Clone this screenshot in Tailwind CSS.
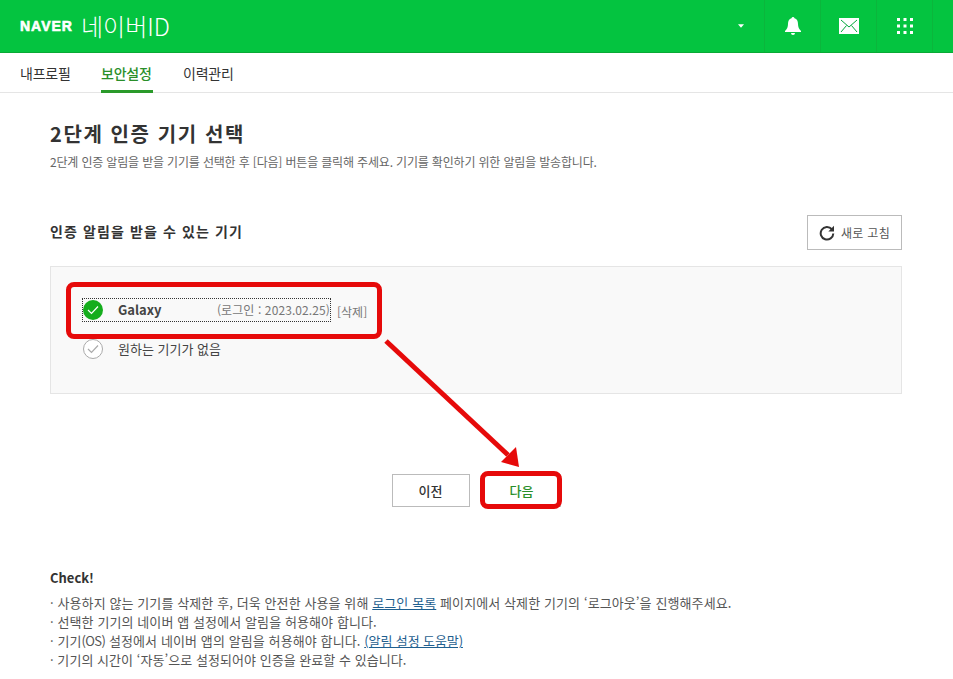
<!DOCTYPE html>
<html lang="ko">
<head>
    <meta charset="UTF-8">
    <title>네이버ID</title>
    <script src="https://cdn.jsdelivr.net/npm/@tailwindcss/browser@4"></script>
</head>
<body class="relative h-[679px] w-[953px] overflow-hidden bg-white font-['Noto_Sans_CJK_KR','Noto_Sans',sans-serif] text-[#333]">
    <!-- Header -->
    <header class="flex h-[53px] items-center border-b border-[#09aa35] bg-[#04c440] pl-[20px] text-white">
        <span class="font-['Liberation_Sans',sans-serif] text-[14px] font-black tracking-[1px] [-webkit-text-stroke:0.6px_white]">NAVER</span>
        <span class="ml-[8px] text-[24px] font-light leading-none">네이버ID</span>
        <div class="ml-auto flex h-full items-center pr-[20px]">
            <svg class="mr-[20px]" width="6" height="4" viewBox="0 0 7 4"><path d="M0 0h7L3.5 4z" fill="#fff"/></svg>
            <div class="flex h-full w-[56px] items-center justify-center border-l border-[#0bb63c]">
                <svg width="16" height="18" viewBox="0 0 16 18" fill="#fff"><path d="M8 0a1.6 1.6 0 0 1 1.5 1.2C12 2 13 4 13 7c0 3 1 5 3 7v1H0v-1c2-2 3-4 3-7 0-3 1-5 3.500-5.800A1.600 1.600 0 0 1 8 0zM6 16h4a2 2 0 0 1-4 0z"/></svg>
            </div>
            <div class="flex h-full w-[56px] items-center justify-center border-l border-[#0bb63c]">
                <svg width="20" height="16" viewBox="0 0 20 16"><rect width="20" height="16" fill="#fff"/><path d="M2 2l8 7 8-7M2 14l5.500-6.500M18 14l-5.500-6.500" fill="none" stroke="#04a83c" stroke-width="1"/></svg>
            </div>
            <div class="flex h-full w-[57px] items-center justify-center border-x border-[#0bb63c]">
                <svg width="16" height="16" viewBox="0 0 16 16" fill="#fff"><rect width="3" height="3"/><rect x="6.500" width="3" height="3"/><rect x="13" width="3" height="3"/><rect y="6.500" width="3" height="3"/><rect x="6.500" y="6.500" width="3" height="3"/><rect x="13" y="6.500" width="3" height="3"/><rect y="13" width="3" height="3"/><rect x="6.500" y="13" width="3" height="3"/><rect x="13" y="13" width="3" height="3"/></svg>
            </div>
        </div>
    </header>

    <!-- Tabs -->
    <nav class="flex h-[40px] gap-[30px] border-b border-[#e5e5e5] pl-[20px] text-[14px] tracking-[-0.2px]">
        <a class="flex h-[40px] w-[51px] items-center whitespace-nowrap">내프로필</a>
        <a class="flex h-[40px] w-[52px] items-center whitespace-nowrap border-b-[3px] border-[#2a9a2a] pt-[3px] font-medium text-[#2a8f2a]">보안설정</a>
        <a class="flex h-[40px] w-[51px] items-center whitespace-nowrap">이력관리</a>
    </nav>

    <main class="px-[50px] pr-[51px]">
        <h1 class="mt-[26px] text-[20px] font-bold leading-[30px] tracking-[1.6px]">2단계 인증 기기 선택</h1>
        <p class="mt-[5px] text-[12px] leading-[16px] tracking-[-0.17px] text-[#666]">2단계 인증 알림을 받을 기기를 선택한 후 [다음] 버튼을 클릭해 주세요. 기기를 확인하기 위한 알림을 발송합니다.</p>

        <div class="mt-[45px] flex h-[35px] items-center justify-between">
            <h2 class="pb-[2px] text-[14px] font-bold tracking-[1.1px]">인증 알림을 받을 수 있는 기기</h2>
            <button class="flex h-[35px] w-[95px] items-center justify-center gap-[6px] border border-[#bbb] bg-white text-[12px] tracking-[0.3px] text-[#555]">
                <svg width="16" height="16" viewBox="0 0 16 16" fill="none" stroke="#333" stroke-width="2"><path d="M12.800 4.200A6.300 6.300 0 1 0 14.300 8.500"/><path d="M15 0.800v5.700H9.300z" stroke="none" fill="#333"/></svg>
                새로 고침
            </button>
        </div>

        <!-- Device list -->
        <div class="mt-[16px] h-[128px] border border-[#e5e5e5] bg-[#f9f9f9] pl-[31px] pt-[31px]">
            <div class="flex h-[24px] w-[249px] items-center border border-dotted border-[#333]">
                <span class="flex h-[20px] w-[20px] shrink-0 items-center justify-center rounded-full bg-[#15ad1d]">
                    <svg width="12" height="10" viewBox="0 0 12 10" fill="none" stroke="#fff" stroke-width="1.200"><path d="M1 5l3.500 3.500L11 1.500"/></svg>
                </span>
                <span class="ml-[15px] text-[13px] font-bold text-[#444]">Galaxy</span>
                <span class="ml-auto whitespace-nowrap text-[12px] tracking-[0.1px] text-[#777]">(로그인 : 2023.02.25)</span>
            </div>
            <div class="ml-[1px] mt-[17px] flex h-[20px] items-center">
                <span class="flex h-[20px] w-[20px] shrink-0 items-center justify-center rounded-full border border-[#aaa] bg-white">
                    <svg width="12" height="10" viewBox="0 0 12 10" fill="none" stroke="#aaa" stroke-width="1.200"><path d="M1 5l3.500 3.500L11 1.500"/></svg>
                </span>
                <span class="ml-[15px] text-[13px] text-[#444]">원하는 기기가 없음</span>
            </div>
        </div>

        <!-- Buttons -->
        <div class="mt-[80px] flex justify-center gap-[13px]">
            <button class="h-[33px] w-[78px] border border-[#bbb] bg-white text-[13px] font-medium">이전</button>
            <button class="h-[33px] w-[78px] border border-[#bbb] bg-white text-[13px] font-medium text-[#2a8f2a]">다음</button>
        </div>

        <!-- Notes -->
        <h3 class="mt-[60px] text-[13px] font-bold leading-[22px]">Check!</h3>
        <ul class="mt-[4px] whitespace-nowrap text-[13px] leading-[19px] tracking-[0.1px] text-[#555]">
            <li>· 사용하지 않는 기기를 삭제한 후, 더욱 안전한 사용을 위해 <a class="text-[#1f5f8f] underline">로그인 목록</a> 페이지에서 삭제한 기기의 ‘로그아웃’을 진행해주세요.</li>
            <li>· 선택한 기기의 네이버 앱 설정에서 알림을 허용해야 합니다.</li>
            <li>· 기기<span class="tracking-[-0.65px]">(OS)</span> 설정에서 네이버 앱의 알림을 허용해야 합니다. <a class="tracking-[-0.1px] text-[#1f5f8f] underline">(알림 설정 도움말)</a></li>
            <li class="tracking-[0.05px]">· 기기의 시간이 ‘자동’으로 설정되어야 인증을 완료할 수 있습니다.</li>
        </ul>
    </main>

    <!-- Delete link beside the device row -->
    <span class="absolute left-[337px] top-[304px] text-[12px] leading-[16px] text-[#777]">[삭제]</span>

    <!-- Red annotations -->
    <div class="absolute left-[66px] top-[282px] h-[57px] w-[316px] rounded-[8px] border-[5px] border-[#e60a0a]"></div>
    <div class="absolute left-[480px] top-[471px] h-[38px] w-[82px] rounded-[8px] border-[5px] border-[#e60a0a]"></div>
    <svg class="absolute left-[380px] top-[335px]" width="145" height="135" viewBox="0 0 145 135">
        <path d="M6 6L128 120" stroke="#e60a0a" stroke-width="5" fill="none"/>
        <path d="M139 132L136 112L121 127z" fill="#e60a0a"/>
    </svg>
</body>
</html>
